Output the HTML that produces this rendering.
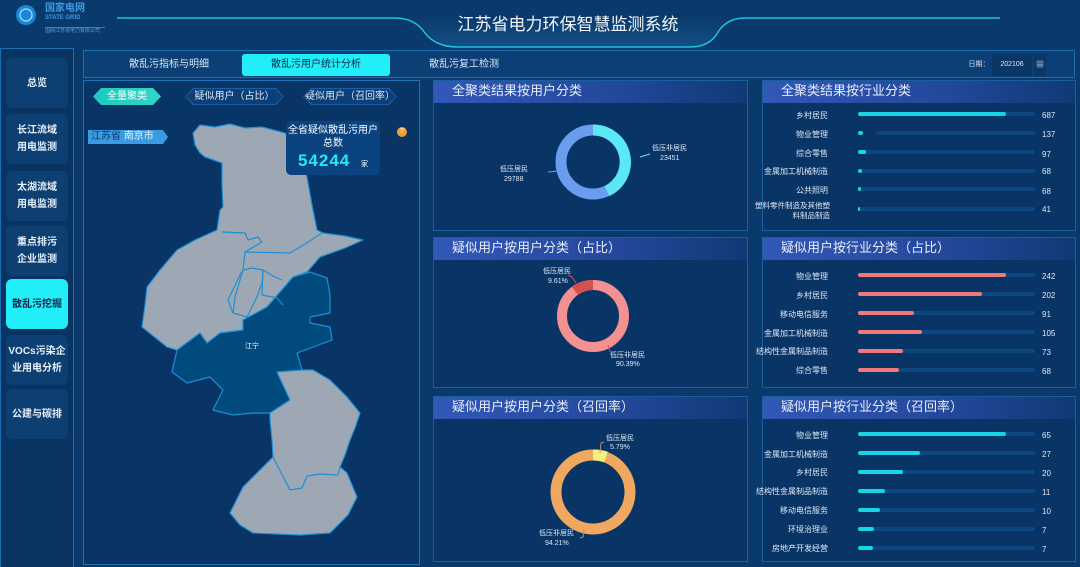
<!DOCTYPE html>
<html><head><meta charset="utf-8">
<style>
*{margin:0;padding:0;box-sizing:border-box}
body{width:1080px;height:567px;overflow:hidden;background:#0a3a6c;font-family:"Liberation Sans","Noto Sans CJK SC",sans-serif;color:#fff;position:relative}
.a{position:absolute}
.side{left:0;top:48px;width:74px;height:519px;border:1px solid #1a6fb0;border-bottom:none;background:#093462}
.btn{position:absolute;left:5px;width:62px;height:50px;border-radius:6px;background:#0d3f72;font-size:10px;font-weight:bold;text-align:center;display:flex;align-items:center;justify-content:center;line-height:17px;color:#e8f0fa}
.btn.on{background:#22eef8;color:#08284c}
.tabs{left:83px;top:50px;width:992px;height:28px;border:1px solid #1c6fb0;background:#0b3f75}
.tab{position:absolute;top:3px;height:22px;font-size:10px;line-height:22px;text-align:center;color:#d9e6f5}
.panel{border:1px solid #1b5e9c;background:#083566}
.hd{position:absolute;left:0;top:0;height:22px;width:100%;background:linear-gradient(90deg,#3258b8,#23479a 60%,rgba(30,70,150,0.3));font-size:13px;line-height:20px;padding-left:18px;color:#e8eefa}
.lb{position:absolute;font-size:8px;color:#dfe8f5;text-align:right;width:80px}
.tr{position:absolute;height:4px;background:#0d4780;border-radius:2px}
.fl{position:absolute;height:4px;border-radius:2px}
.v{position:absolute;font-size:8px;color:#dfe8f5}
.sub{position:absolute;top:88px;height:17px;font-size:10px;line-height:17px;text-align:center;color:#dce8f6;background:#1a5ea8;clip-path:polygon(8px 0,calc(100% - 8px) 0,100% 50%,calc(100% - 8px) 100%,8px 100%,0 50%)}
.sub span{position:absolute;left:1px;top:1px;right:1px;bottom:1px;background:#0c3f78;clip-path:polygon(8px 0,calc(100% - 8px) 0,100% 50%,calc(100% - 8px) 100%,8px 100%,0 50%);line-height:15px}
</style></head><body>
<!-- header -->
<svg class="a" style="left:0;top:0" width="1080" height="50">
<defs><linearGradient id="hg" x1="0" x2="0" y1="0" y2="1"><stop offset="0" stop-color="#0a3a6c"/><stop offset="1" stop-color="#1b5d96"/></linearGradient></defs>
<path d="M400 17 Q420 17 430 35 Q440 47 460 47 L690 47 Q708 47 716 32 Q726 18 745 18 Z" fill="url(#hg)" opacity="0.6"/>
<path d="M117 18 L395 18 Q415 18 425 33 Q436 47 458 47 L690 47 Q710 47 718 32 Q727 18 745 18 L1000 18" fill="none" stroke="#1ec3e0" stroke-width="1.5"/>
<circle cx="26" cy="15" r="10" fill="#1a87d6"/><circle cx="26" cy="15" r="6" fill="none" stroke="#8fd0ff" stroke-width="1.5"/>
</svg>
<div class="a" style="left:45px;top:3px;font-size:10px;line-height:11px;font-weight:bold;color:#3d9ae8">国家电网</div>
<div class="a" style="left:45px;top:15px;font-size:6px;line-height:7px;font-weight:bold;color:#3d9ae8">STATE GRID</div>
<div class="a" style="left:45px;top:27px;width:60px;border-top:1px solid #3d7ab8;font-size:5px;line-height:7px;color:#5aa0e0">国网江苏省电力有限公司</div>
<div class="a" style="left:440px;top:10px;width:256px;text-align:center;font-size:17px;color:#f2f6fc">江苏省电力环保智慧监测系统</div>
<!-- sidebar -->
<div class="a side">
<div class="btn" style="top:9px">总览</div>
<div class="btn" style="top:65px">长江流域<br>用电监测</div>
<div class="btn" style="top:122px">太湖流域<br>用电监测</div>
<div class="btn" style="top:177px">重点排污<br>企业监测</div>
<div class="btn on" style="top:230px">散乱污挖掘</div>
<div class="btn" style="top:286px">VOCs污染企<br>业用电分析</div>
<div class="btn" style="top:340px">公建与碳排</div>
</div>
<!-- tabs -->
<div class="a tabs">
<div class="tab" style="left:20px;width:130px">散乱污指标与明细</div>
<div class="tab" style="left:158px;width:148px;background:#22eef8;color:#08284c;border-radius:3px">散乱污用户统计分析</div>
<div class="tab" style="left:315px;width:130px">散乱污复工检测</div>
<div class="tab" style="left:880px;width:30px;font-size:7px">日期：</div>
<div class="tab" style="left:908px;width:40px;font-size:7px;background:#0a3766">202106</div>
<div class="tab" style="left:950px;width:12px;font-size:8px;background:#0a3766">▦</div>
</div>
<!-- left panel -->
<div class="a panel" style="left:83px;top:80px;width:337px;height:485px;border-color:#1e73b8"></div>
<div class="sub" style="left:93px;width:68px;background:linear-gradient(90deg,#1fc8c0,#2fd8c8);color:#fff">全量聚类</div>
<div class="sub" style="left:185px;width:99px"><span>疑似用户（占比）</span></div>
<div class="sub" style="left:303px;width:94px"><span>疑似用户（召回率）</span></div>
<div class="a" style="left:88px;top:130px;width:80px;height:14px;background:#3a9be0;font-size:10px;line-height:14px;padding-left:3px;color:#0b3a6c;clip-path:polygon(0 0,75px 0,80px 50%,75px 100%,0 100%)">江苏省 <span style="color:#e8f4ff">南京市</span></div>
<svg class="a" style="left:0;top:0" width="420" height="567">
<g stroke="#1f8fd4" stroke-width="1.2" stroke-linejoin="round">
<path fill="#9ea8b4" d="M193 133 L200 125 L215 127 L230 124 L245 128 L262 127 L285 133 L300 150 L307 177 L312 205 L317 230 L323 233 L345 236 L363 240 L345 248 L320 257 L307 272 L293 277 L267 307 L243 320 L243 330 L220 333 L207 343 L200 333 L177 350 L167 347 L142 327 L145 305 L147 287 L160 270 L177 250 L195 240 L217 230 L220 210 L223 207 L222 185 L222 163 L205 157 L200 153 L195 145 Z"/>
<path fill="#014a7e" d="M177 350 L200 333 L207 343 L220 333 L243 330 L243 320 L267 307 L293 277 L310 272 L327 278 L330 295 L330 313 L310 317 L310 323 L330 327 L332 340 L297 353 L302 370 L277 372 L290 400 L270 413 L253 413 L233 415 L213 410 L223 390 L210 377 L187 383 L172 372 Z"/>
<path fill="#9ea8b4" d="M277 372 L302 370 L313 370 L330 380 L347 397 L360 413 L355 428 L350 440 L345 455 L340 467 L347 473 L357 497 L348 515 L330 533 L300 535 L253 533 L240 525 L230 513 L243 487 L260 470 L273 457 L272 440 L270 420 L270 413 L290 400 Z"/>
<path fill="none" d="M222 232 L245 233 L248 240 L258 237 L262 242 L245 252 L243 270 L235 297 L233 313 L247 317 L257 297 L262 283 L263 270 M245 252 L290 253 L305 244 L322 233 M243 270 L252 268 L263 270 L275 277 L282 280 M263 270 L262 295 L277 298 L283 305 M233 313 L228 300 L240 275 L243 270 M273 457 L290 490 L302 488 L307 476 L320 474 L338 475 L340 467"/>
</g>
<text x="245" y="348" font-size="7" fill="#fff" font-family="Liberation Sans,Noto Sans CJK SC,sans-serif">江宁</text>
</svg>
<div class="a" style="left:286px;top:121px;width:94px;height:54px;background:#0b4380;border-radius:5px;text-align:center;font-size:10px;line-height:13px;padding-top:3px">全省疑似散乱污用户<br>总数<br><span style="font-size:17px;font-weight:bold;color:#24e8f2;line-height:22px;letter-spacing:1px">54244</span> <span style="font-size:7px;margin-left:8px">家</span></div>
<div class="a" style="left:397px;top:127px;width:10px;height:10px;border-radius:50%;background:#f0a030;font-size:7px;line-height:10px;text-align:center;color:#fff">?</div>
<!-- middle panels -->
<div class="a panel" style="left:433px;top:80px;width:315px;height:151px"><div class="hd">全聚类结果按用户分类</div></div>
<div class="a panel" style="left:433px;top:237px;width:315px;height:151px"><div class="hd">疑似用户按用户分类（占比）</div></div>
<div class="a panel" style="left:433px;top:396px;width:315px;height:166px"><div class="hd">疑似用户按用户分类（召回率）</div></div>
<div class="a panel" style="left:762px;top:80px;width:314px;height:151px"><div class="hd">全聚类结果按行业分类</div></div>
<div class="a panel" style="left:762px;top:237px;width:314px;height:151px"><div class="hd">疑似用户按行业分类（占比）</div></div>
<div class="a panel" style="left:762px;top:396px;width:314px;height:166px"><div class="hd">疑似用户按行业分类（召回率）</div></div>
<svg class="a" style="left:0;top:0" width="760" height="567" font-family="Liberation Sans,Noto Sans CJK SC,sans-serif" font-size="7" fill="#dfe8f5">
<circle cx="593" cy="162" r="32" fill="none" stroke="#6a9cf0" stroke-width="11"/>
<path d="M593 130 A32 32 0 0 1 607 191" fill="none" stroke="#5ae8f5" stroke-width="11"/>
<path d="M640 157 L650 154" stroke="#5ae8f5"/><path d="M548 172 L558 171" stroke="#6a9cf0"/>
<text x="652" y="150">低压非居民</text><text x="660" y="160">23451</text>
<text x="500" y="171">低压居民</text><text x="504" y="181">29788</text>
<circle cx="593" cy="316" r="31" fill="none" stroke="#f39090" stroke-width="10"/>
<path d="M593 285 A31 31 0 0 0 575 291" fill="none" stroke="#d65050" stroke-width="10"/>
<path d="M576 283 L572 277 L568 275 M608 345 L610 352" stroke="#d65050" fill="none"/>
<text x="543" y="273">低压居民</text><text x="548" y="283">9.61%</text>
<text x="610" y="357">低压非居民</text><text x="616" y="366">90.39%</text>
<circle cx="593" cy="492" r="37" fill="none" stroke="#f0a860" stroke-width="11"/>
<path d="M593 455 A37 37 0 0 1 606 457" fill="none" stroke="#f6f080" stroke-width="11"/>
<path d="M600 453 L601 443 L604 442 M584 529 L583 537 L580 538" stroke="#c09060" fill="none"/>
<text x="606" y="440">低压居民</text><text x="610" y="449">5.79%</text>
<text x="539" y="535">低压非居民</text><text x="545" y="545">94.21%</text>
</svg>
<div class="lb" style="left:748px;top:110px">乡村居民</div><div class="tr" style="left:858px;top:112px;width:177px"></div><div class="fl" style="left:858px;top:112px;width:148px;background:#17d4e6"></div><div class="v" style="left:1042px;top:111px">687</div>
<div class="lb" style="left:748px;top:129px">物业管理</div><div class="tr" style="left:876px;top:131px;width:159px"></div><div class="fl" style="left:858px;top:131px;width:5px;background:#17d4e6"></div><div class="v" style="left:1042px;top:130px">137</div>
<div class="lb" style="left:748px;top:148px">综合零售</div><div class="tr" style="left:858px;top:150px;width:177px"></div><div class="fl" style="left:858px;top:150px;width:8px;background:#17d4e6"></div><div class="v" style="left:1042px;top:150px">97</div>
<div class="lb" style="left:748px;top:166px">金属加工机械制造</div><div class="tr" style="left:858px;top:169px;width:177px"></div><div class="fl" style="left:858px;top:169px;width:4px;background:#17d4e6"></div><div class="v" style="left:1042px;top:167px">68</div>
<div class="lb" style="left:748px;top:185px">公共照明</div><div class="tr" style="left:858px;top:187px;width:177px"></div><div class="fl" style="left:858px;top:187px;width:3px;background:#17d4e6"></div><div class="v" style="left:1042px;top:187px">68</div>
<div class="lb" style="left:748px;top:201px;line-height:10px;font-size:7.5px;width:82px">塑料零件制造及其他塑<br>料制品制造</div><div class="tr" style="left:858px;top:207px;width:177px"></div><div class="fl" style="left:858px;top:207px;width:2px;background:#17d4e6"></div><div class="v" style="left:1042px;top:205px">41</div>

<div class="lb" style="left:748px;top:271px">物业管理</div><div class="tr" style="left:858px;top:273px;width:177px"></div><div class="fl" style="left:858px;top:273px;width:148px;background:#f07a7a"></div><div class="v" style="left:1042px;top:272px">242</div>
<div class="lb" style="left:748px;top:290px">乡村居民</div><div class="tr" style="left:858px;top:292px;width:177px"></div><div class="fl" style="left:858px;top:292px;width:124px;background:#f07a7a"></div><div class="v" style="left:1042px;top:291px">202</div>
<div class="lb" style="left:748px;top:309px">移动电信服务</div><div class="tr" style="left:858px;top:311px;width:177px"></div><div class="fl" style="left:858px;top:311px;width:56px;background:#f07a7a"></div><div class="v" style="left:1042px;top:310px">91</div>
<div class="lb" style="left:748px;top:328px">金属加工机械制造</div><div class="tr" style="left:858px;top:330px;width:177px"></div><div class="fl" style="left:858px;top:330px;width:64px;background:#f07a7a"></div><div class="v" style="left:1042px;top:329px">105</div>
<div class="lb" style="left:748px;top:346px">结构性金属制品制造</div><div class="tr" style="left:858px;top:349px;width:177px"></div><div class="fl" style="left:858px;top:349px;width:45px;background:#f07a7a"></div><div class="v" style="left:1042px;top:348px">73</div>
<div class="lb" style="left:748px;top:365px">综合零售</div><div class="tr" style="left:858px;top:368px;width:177px"></div><div class="fl" style="left:858px;top:368px;width:41px;background:#f07a7a"></div><div class="v" style="left:1042px;top:367px">68</div>

<div class="lb" style="left:748px;top:430px">物业管理</div><div class="tr" style="left:858px;top:432px;width:177px"></div><div class="fl" style="left:858px;top:432px;width:148px;background:#17d4e6"></div><div class="v" style="left:1042px;top:431px">65</div>
<div class="lb" style="left:748px;top:449px">金属加工机械制造</div><div class="tr" style="left:858px;top:451px;width:177px"></div><div class="fl" style="left:858px;top:451px;width:62px;background:#17d4e6"></div><div class="v" style="left:1042px;top:450px">27</div>
<div class="lb" style="left:748px;top:467px">乡村居民</div><div class="tr" style="left:858px;top:470px;width:177px"></div><div class="fl" style="left:858px;top:470px;width:45px;background:#17d4e6"></div><div class="v" style="left:1042px;top:469px">20</div>
<div class="lb" style="left:748px;top:486px">结构性金属制品制造</div><div class="tr" style="left:858px;top:489px;width:177px"></div><div class="fl" style="left:858px;top:489px;width:27px;background:#17d4e6"></div><div class="v" style="left:1042px;top:488px">11</div>
<div class="lb" style="left:748px;top:505px">移动电信服务</div><div class="tr" style="left:858px;top:508px;width:177px"></div><div class="fl" style="left:858px;top:508px;width:22px;background:#17d4e6"></div><div class="v" style="left:1042px;top:507px">10</div>
<div class="lb" style="left:748px;top:524px">环境治理业</div><div class="tr" style="left:858px;top:527px;width:177px"></div><div class="fl" style="left:858px;top:527px;width:16px;background:#17d4e6"></div><div class="v" style="left:1042px;top:526px">7</div>
<div class="lb" style="left:748px;top:543px">房地产开发经营</div><div class="tr" style="left:858px;top:546px;width:177px"></div><div class="fl" style="left:858px;top:546px;width:15px;background:#17d4e6"></div><div class="v" style="left:1042px;top:545px">7</div>
</body></html>
